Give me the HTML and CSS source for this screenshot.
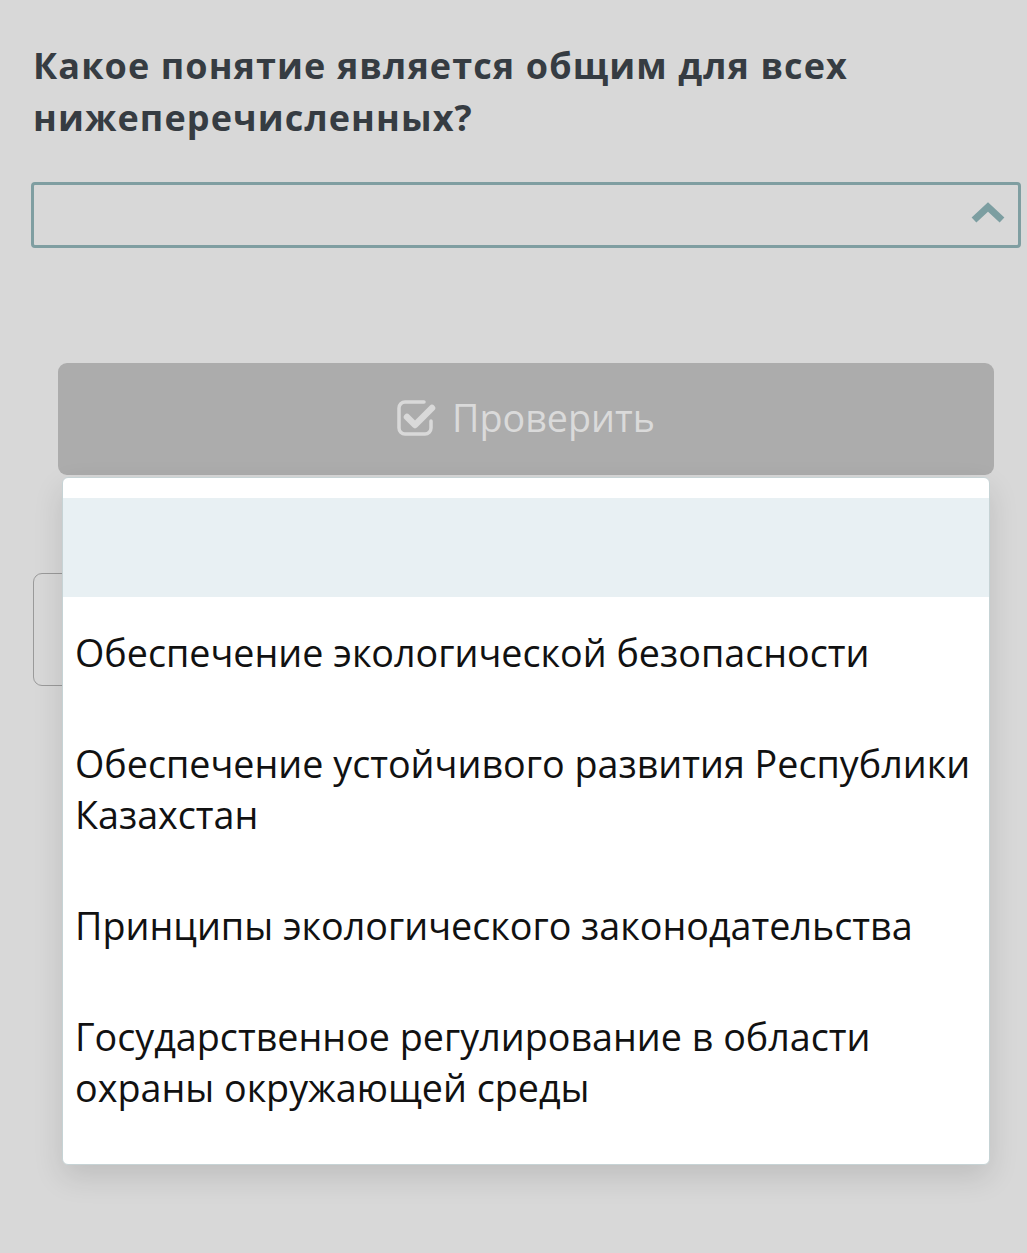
FILE: index.html
```html
<!DOCTYPE html>
<html lang="ru">
<head>
<meta charset="utf-8">
<link rel="stylesheet" href="styles.css">
</head>
<body>
<div class="page">
  <h1 class="question">Какое понятие является общим для всех нижеперечисленных?</h1>
  <div class="select">
    <svg class="chevron" width="34" height="22" viewBox="0 0 34 22"><path d="M3 18 L17 5 L31 18" fill="none" stroke="#7c9ea1" stroke-width="7" stroke-linejoin="miter"/></svg>
  </div>
  <div class="actions">
    <div class="check-btn">
      <svg class="check-icon" width="40" height="36" viewBox="0 0 40 36"><path d="M27 2 H8 a6 6 0 0 0 -6 6 V28 a6 6 0 0 0 6 6 H28 a6 6 0 0 0 6 -6 V21" fill="none" stroke="#d9d9d9" stroke-width="3.5" stroke-linecap="round"/><path d="M10 17 L18 25 L35 8" fill="none" stroke="#d9d9d9" stroke-width="6.5" stroke-linecap="round" stroke-linejoin="round"/></svg>
      <span>Проверить</span>
    </div>
    <div class="behind"></div>
    <ul class="dropdown">
      <li class="opt blank"></li>
      <li class="opt">Обеспечение экологической безопасности</li>
      <li class="opt">Обеспечение устойчивого развития Республики Казахстан</li>
      <li class="opt">Принципы экологического законодательства</li>
      <li class="opt">Государственное регулирование в области охраны окружающей среды</li>
    </ul>
  </div>
</div>
</body>
</html>
```
FILE: styles.css
```css
html, body {
  margin: 0;
  padding: 0;
  background: #d8d8d8;
}
body {
  font-family: "Open Sans", "Noto Sans", sans-serif;
  height: 1253px;
  overflow: hidden;
}
.page {
  padding: 40px 6px 0 33px;
}
.question {
  margin: 0;
  font-size: 36px;
  font-weight: 700;
  line-height: 52px;
  color: #363c42;
  letter-spacing: 1.1px;
}
.select {
  box-sizing: border-box;
  margin: 38px 0 0 -2px;
  height: 66px;
  border: 3px solid #7f9ea1;
  border-radius: 4px;
  display: flex;
  align-items: center;
  justify-content: flex-end;
  padding-right: 13px;
}
.chevron {
  display: block;
  margin-top: -4px;
}
.actions {
  position: relative;
  margin: 115px 27px 0 25px;
}
.check-btn {
  height: 112px;
  background: #acacac;
  border-radius: 9px;
  display: flex;
  align-items: center;
  justify-content: center;
  gap: 15px;
  color: #dadada;
  font-size: 37.7px;
}
.check-icon {
  display: block;
  margin-top: -2px;
}
.check-btn span {
  margin-top: -4px;
}
.behind {
  position: absolute;
  left: -25px;
  top: 210px;
  width: 60px;
  height: 111px;
  border: 1px solid #9a9a9a;
  border-radius: 9px;
}
.dropdown {
  position: absolute;
  left: 4px;
  right: 4px;
  top: 114px;
  margin: 0;
  padding: 20px 0 21px;
  list-style: none;
  background: #ffffff;
  border: 1px solid #c6d3d5;
  border-radius: 6px;
  box-shadow: 0 12px 30px rgba(0, 0, 0, 0.12);
  z-index: 2;
}
.opt {
  padding: 30px 4px 30px 12px;
  font-size: 37.7px;
  line-height: 51px;
  color: #111111;
}
.opt.blank {
  height: 99px;
  padding: 0;
  background: #e8f0f3;
}
```
